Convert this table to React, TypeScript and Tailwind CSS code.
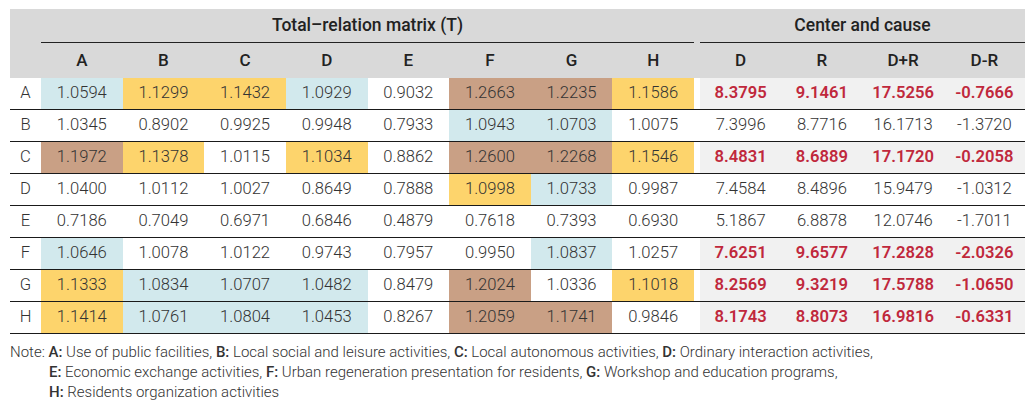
import React from 'react';

type Tone = '' | 'b' | 'y' | 'r';

const toneClass: Record<Tone, string> = {
    '': 'bg-white',
    b: 'bg-[#d2e9ed]',
    y: 'bg-[#fdd46c]',
    r: 'bg-[#c9a085]',
};

// each matrix cell is "value:tone"
const rows: { label: string; cells: string[]; center: string[]; hl: boolean }[] = [
    { label: 'A', cells: ['1.0594:b', '1.1299:y', '1.1432:y', '1.0929:b', '0.9032:', '1.2663:r', '1.2235:r', '1.1586:y'], center: ['8.3795', '9.1461', '17.5256', '-0.7666'], hl: true },
    { label: 'B', cells: ['1.0345:', '0.8902:', '0.9925:', '0.9948:', '0.7933:', '1.0943:b', '1.0703:b', '1.0075:'], center: ['7.3996', '8.7716', '16.1713', '-1.3720'], hl: false },
    { label: 'C', cells: ['1.1972:r', '1.1378:y', '1.0115:', '1.1034:y', '0.8862:', '1.2600:r', '1.2268:r', '1.1546:y'], center: ['8.4831', '8.6889', '17.1720', '-0.2058'], hl: true },
    { label: 'D', cells: ['1.0400:', '1.0112:', '1.0027:', '0.8649:', '0.7888:', '1.0998:y', '1.0733:b', '0.9987:'], center: ['7.4584', '8.4896', '15.9479', '-1.0312'], hl: false },
    { label: 'E', cells: ['0.7186:', '0.7049:', '0.6971:', '0.6846:', '0.4879:', '0.7618:', '0.7393:', '0.6930:'], center: ['5.1867', '6.8878', '12.0746', '-1.7011'], hl: false },
    { label: 'F', cells: ['1.0646:b', '1.0078:', '1.0122:', '0.9743:', '0.7957:', '0.9950:', '1.0837:b', '1.0257:'], center: ['7.6251', '9.6577', '17.2828', '-2.0326'], hl: true },
    { label: 'G', cells: ['1.1333:y', '1.0834:b', '1.0707:b', '1.0482:b', '0.8479:', '1.2024:r', '1.0336:', '1.1018:y'], center: ['8.2569', '9.3219', '17.5788', '-1.0650'], hl: true },
    { label: 'H', cells: ['1.1414:y', '1.0761:b', '1.0804:b', '1.0453:b', '0.8267:', '1.2059:r', '1.1741:r', '0.9846:'], center: ['8.1743', '8.8073', '16.9816', '-0.6331'], hl: true },
];

const cols = 'grid grid-cols-[31px_repeat(8,81.625px)_6px_repeat(4,81.25px)]';

export default function App() {
    return (
        <div className="w-[1036px] h-[411px] bg-white pt-[9px] pl-[10px] text-[#333] font-['Roboto','Liberation_Sans',sans-serif]">
            <div className="w-[1015px]">
                {/* header */}
                <div className="bg-[#d9d9d9]">
                    <div className={`${cols} h-[34px]`}>
                        <div />
                        <div className="col-span-8 border-b border-[#222] flex items-center justify-center text-[17.5px] font-medium text-[#222]">
                            Total–relation matrix (T)
                        </div>
                        <div />
                        <div className="col-span-4 border-b border-[#222] flex items-center justify-center text-[17.5px] font-medium text-[#222]">
                            Center and cause
                        </div>
                    </div>
                    <div className={`${cols} h-[35px] text-[17px] font-medium text-[#222]`}>
                        <div />
                        {['A', 'B', 'C', 'D', 'E', 'F', 'G', 'H'].map(c => (
                            <div key={c} className="flex items-center justify-center">{c}</div>
                        ))}
                        <div />
                        {['D', 'R', 'D+R', 'D-R'].map(c => (
                            <div key={c} className="flex items-center justify-center">{c}</div>
                        ))}
                    </div>
                </div>

                {/* body */}
                {rows.map(row => (
                    <div key={row.label} className={`${cols} h-[32px] border-b border-[#1a1a1a] text-[16.6px]`}>
                        <div className="flex items-center justify-center font-light">{row.label}</div>
                        {row.cells.map((c, i) => {
                            const [v, t] = c.split(':') as [string, Tone];
                            return (
                                <div key={i} className={`${toneClass[t]} flex items-center justify-center font-light`}>{v}</div>
                            );
                        })}
                        <div className="bg-white" />
                        {row.center.map((v, i) => (
                            <div
                                key={i}
                                className={row.hl
                                    ? 'bg-[#f1f1f1] flex items-center justify-center font-semibold text-[#c0283c]'
                                    : 'bg-white flex items-center justify-center font-light'}
                            >
                                {v}
                            </div>
                        ))}
                    </div>
                ))}
            </div>

            {/* note */}
            <div className="mt-[8px] text-[15px] leading-[20px] font-light text-[#333]">
                <p>
                    Note: <b className="font-medium">A:</b> Use of public facilities, <b className="font-medium">B:</b> Local social and leisure activities, <b className="font-medium">C:</b> Local autonomous activities, <b className="font-medium">D:</b> Ordinary interaction activities,
                </p>
                <p className="pl-[39px]">
                    <b className="font-medium">E:</b> Economic exchange activities, <b className="font-medium">F:</b> Urban regeneration presentation for residents, <b className="font-medium">G:</b> Workshop and education programs,
                </p>
                <p className="pl-[39px]">
                    <b className="font-medium">H:</b> Residents organization activities
                </p>
            </div>
        </div>
    );
}
